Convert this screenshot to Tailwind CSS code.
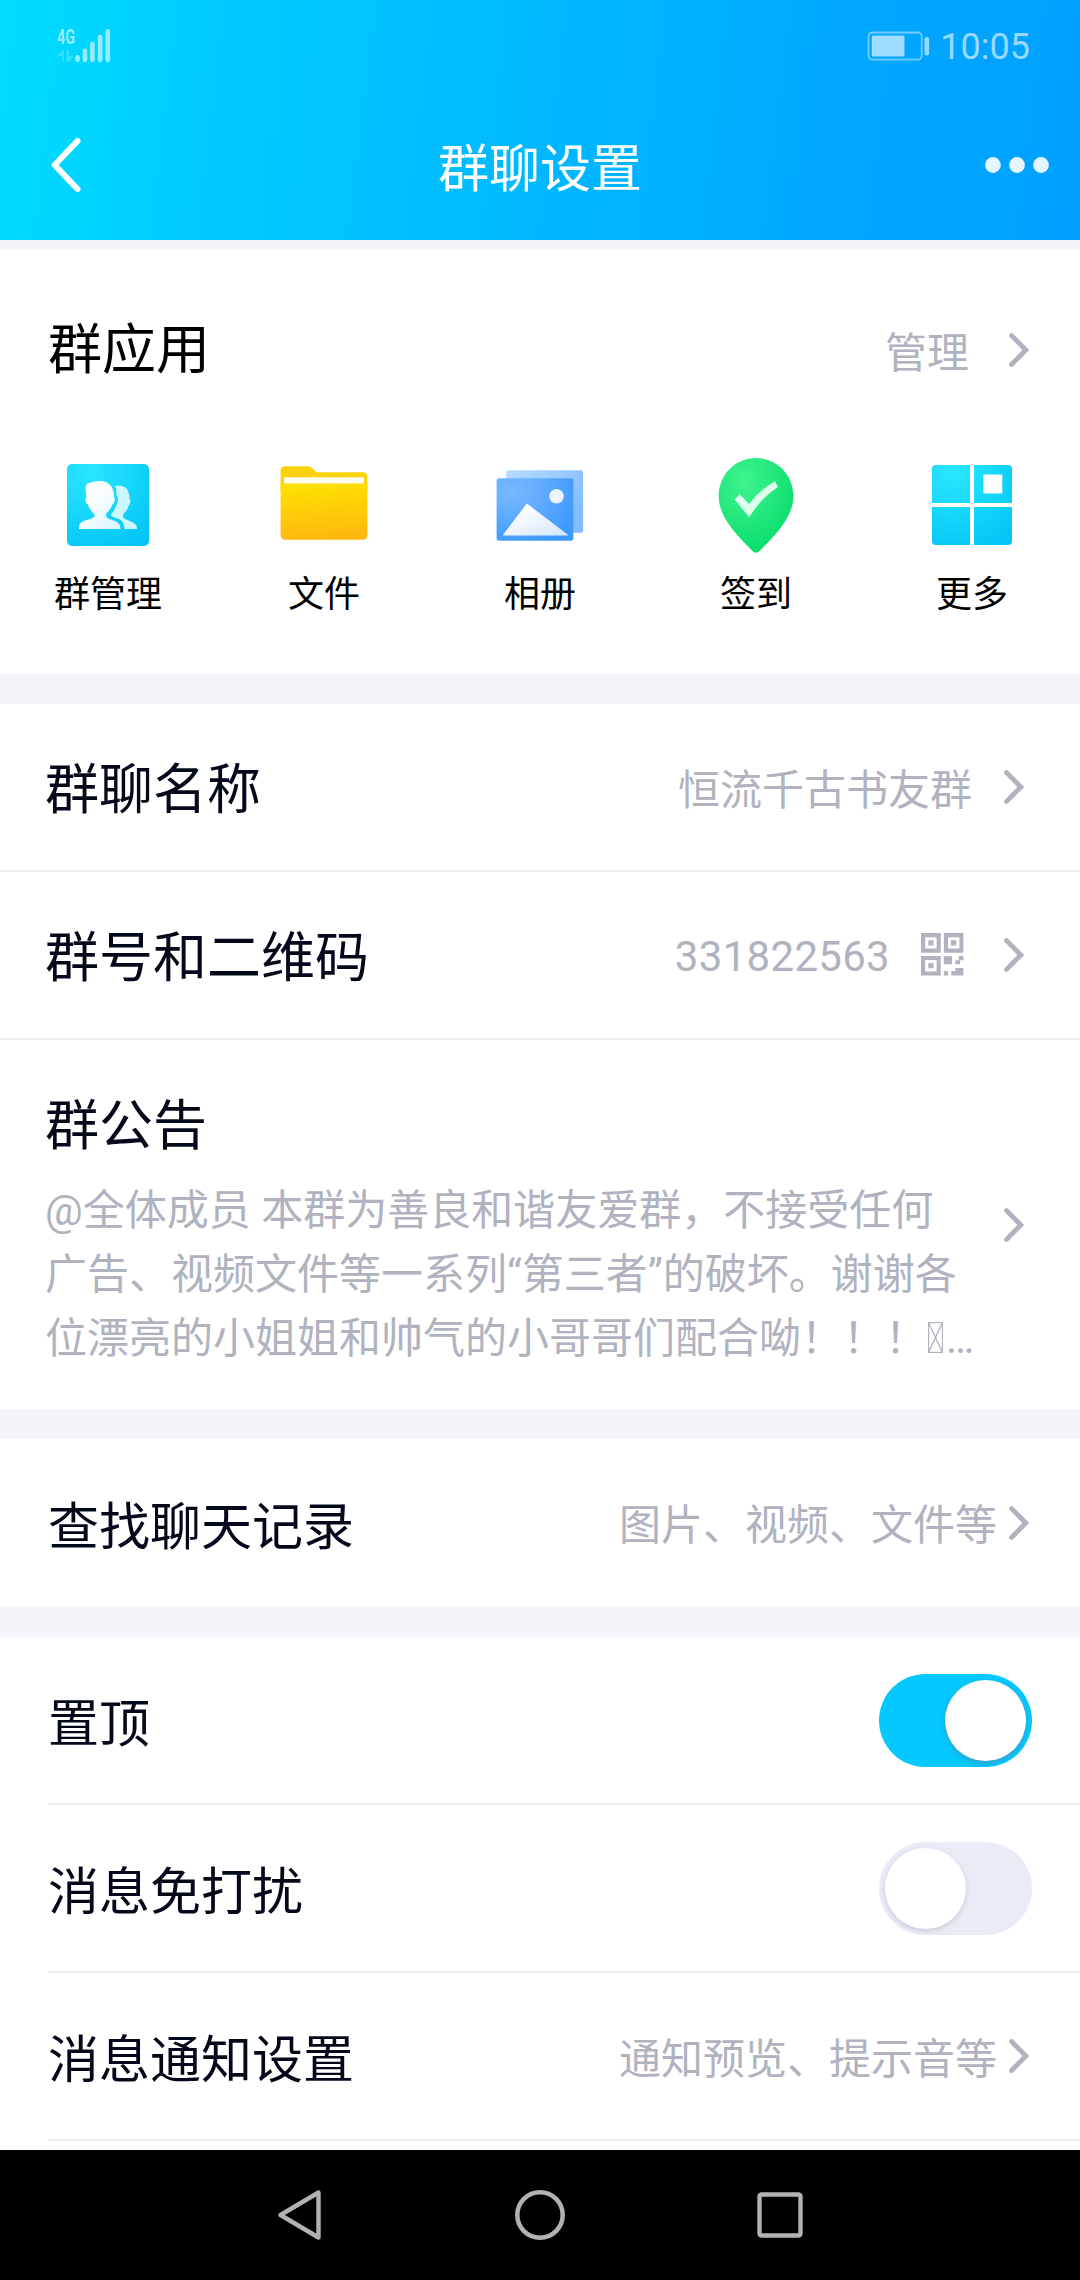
<!DOCTYPE html>
<html lang="zh-CN">
<head>
<meta charset="utf-8">
<title>群聊设置</title>
<script src="https://cdn.jsdelivr.net/npm/@tailwindcss/browser@4"></script>
</head>
<body class="w-[1080px] h-[2280px] overflow-hidden flex flex-col bg-[#f4f5fa] font-['Noto_Sans_CJK_SC',sans-serif] text-black whitespace-nowrap">
<svg class="hidden">
  <symbol id="chev" viewBox="0 0 20 34"><path d="M2.600 2.600L16.800 17L2.600 31.400" fill="none" stroke="#b0b3bf" stroke-width="4.900" stroke-linecap="round"/></symbol>
</svg>

<header class="h-[240px] shrink-0 flex flex-col text-white bg-[linear-gradient(97deg,#00dcff_0%,#00ccff_19%,#00b8ff_50%,#00a6ff_80%,#00a1ff_100%)]">
  <div class="h-[92px] flex items-center justify-between pl-[48px] pr-[50px]">
    <svg class="w-[72px] h-[52px] overflow-visible" viewBox="48 19 72 52" fill="#fff" fill-opacity=".58">
      <text x="57" y="43" font-family="Roboto" font-weight="700" font-size="21" textLength="18" lengthAdjust="spacingAndGlyphs">4G</text>
      <path opacity=".35" d="M62.500 49.500V61H64V49.500ZM57 55l5.500-6v6zM66.500 49H69v12h-2.500zM69 55h4.500L69 61z"/>
      <rect x="75.300" y="54" width="4.500" height="7" rx="2.200"/><rect x="82.700" y="47.400" width="4.600" height="13.600" rx="2.200"/><rect x="90.100" y="40.700" width="4.600" height="20.300" rx="2.200"/><rect x="97.800" y="33.700" width="4.700" height="27.300" rx="2.200"/><rect x="105.400" y="28" width="4.700" height="33" rx="2.200"/>
    </svg>
    <div class="flex items-center gap-[10px] text-white/60">
      <svg class="w-[63px] h-[30px]" viewBox="867.500 30.500 63 30">
        <rect x="869" y="32" width="53.200" height="27.200" rx="4" fill="none" stroke="#fff" stroke-opacity=".45" stroke-width="1.800"/>
        <rect x="872.300" y="35" width="32.700" height="21" rx="1.500" fill="#fff" fill-opacity=".62"/>
        <rect x="925" y="36.500" width="4.600" height="18.500" rx="2.200" fill="#fff" fill-opacity=".58"/>
      </svg>
      <span class="font-['Roboto'] text-[36px] leading-[42px] pt-[2px]">10:05</span>
    </div>
  </div>
  <div class="h-[148px] flex items-center justify-between pl-[50px] pr-[30px]">
    <svg class="w-[56px] h-[56px] mb-[2px]" viewBox="50 137 56 56"><path d="M77.500 141L54.600 165L77.500 189" fill="none" stroke="#fff" stroke-width="6" stroke-linecap="round" stroke-linejoin="round"/></svg>
    <h1 class="text-[51px] leading-[60px] pr-[10px] mb-[3px]">群聊设置</h1>
    <svg class="w-[66px] h-[20px] mb-[2px]" viewBox="984 155 66 20" fill="#e6f6ff"><circle cx="992.900" cy="165" r="7.900"/><circle cx="1017" cy="165" r="7.900"/><circle cx="1041" cy="165" r="7.900"/></svg>
  </div>
</header>

<main class="h-[1910px] shrink-0 overflow-hidden flex flex-col text-[#03081a]">
  <section class="mt-[9px] h-[425px] shrink-0 bg-white text-black">
    <div class="h-[202px] flex items-center justify-between pl-[48px] pr-[51px]">
      <h2 class="text-[54px] leading-[64px] mb-[9px]">群应用</h2>
      <div class="flex items-center">
        <span class="text-[42px] leading-[50px] text-[#b0b3bf] mr-[40px]">管理</span>
        <svg class="w-[20px] h-[34px]"><use href="#chev"/></svg>
      </div>
    </div>
    <div class="grid grid-cols-5 text-[36px] leading-[42px] text-center">
      <div class="flex flex-col items-center">
        <svg class="w-[108px] h-[108px]" viewBox="54 451 108 108">
          <defs>
            <radialGradient id="cy" cx=".27" cy=".1" r="1.150"><stop stop-color="#29e7ff"/><stop offset="1" stop-color="#00c1f5"/></radialGradient>
            <linearGradient id="wh" x1="0" y1="0" x2="1" y2="1"><stop offset=".3" stop-color="#fff"/><stop offset="1" stop-color="#d6f6ff"/></linearGradient>
          </defs>
          <rect x="67" y="464" width="82" height="82" rx="5" fill="url(#cy)"/>
          <g transform="translate(67 464)">
            <path fill="#ccf7ff" d="M48 22Q55 20 60 25Q62.500 29 62.500 35Q64 36 63 39Q62.500 41 61.500 42Q60 47 56.500 50Q55 53 58 55L65 58Q70 60 70 65H57.500Q57 57 52 55Q46 53.500 43.500 51Q48 46 49 42Q51 39 51 34Q51 32 49.500 32Q50 27 48 22Z"/>
            <path fill="url(#wh)" d="M19 21Q20 19.500 22 19Q28 17 33 17Q40 17 44 22Q47 26 47 33Q48.500 34.500 47.500 37Q47 40 45.500 40.500Q44 45 39 50Q38.500 53 41 54.500L48 57Q53.500 59 53.500 65H12V62Q12.500 58 18 56.500L26 54Q28.500 52 27 50Q22 45 21 40.500Q19 40 18.500 36Q18 33.500 19.500 33Q18 25 19 21Z"/>
          </g>
        </svg>
        <span class="mt-[11px]">群管理</span>
      </div>
      <div class="flex flex-col items-center">
        <svg class="w-[108px] h-[108px]" viewBox="270 451 108 108">
          <defs><linearGradient id="ye" x1=".45" y1="0" x2=".55" y2="1"><stop stop-color="#ffe000"/><stop offset="1" stop-color="#ffb70f"/></linearGradient></defs>
          <path fill="#fad20a" d="M280.600 492V470.500a4.200 4.200 0 0 1 4.200-4.200H308q2.500 0 4 1.700l4.500 4.300H363a4.400 4.400 0 0 1 4.400 4.400V492z"/>
          <rect x="284" y="477.300" width="80" height="7" fill="#fffdf0"/>
          <path fill="url(#ye)" d="M280.600 483.500H367.400V535.300a4.400 4.400 0 0 1-4.400 4.400H285a4.400 4.400 0 0 1-4.400-4.400z"/>
        </svg>
        <span class="mt-[11px]">文件</span>
      </div>
      <div class="flex flex-col items-center">
        <svg class="w-[108px] h-[108px]" viewBox="486 451 108 108">
          <defs>
            <radialGradient id="bl" cx=".2" cy=".2" r=".9"><stop stop-color="#7ab9ff"/><stop offset="1" stop-color="#3f9aff"/></radialGradient>
            <linearGradient id="bb" x1="0" y1="0" x2="1" y2=".6"><stop stop-color="#b9dcff"/><stop offset="1" stop-color="#82bcff"/></linearGradient>
            <linearGradient id="tr" x1="0" y1="0" x2="1" y2="1"><stop offset=".2" stop-color="#fff"/><stop offset="1" stop-color="#d3e7ff"/></linearGradient>
          </defs>
          <rect x="506.200" y="470.300" width="76.900" height="62.400" rx="2.500" fill="url(#bb)"/>
          <rect x="496.600" y="478.300" width="76.800" height="62.400" rx="2.500" fill="url(#bl)"/>
          <path d="M526.900 504L567.500 535H503.400z" fill="url(#tr)" stroke="url(#tr)" stroke-width="1" stroke-linejoin="round"/>
          <circle cx="556.500" cy="496.300" r="7.300" fill="#ebf5ff"/>
        </svg>
        <span class="mt-[11px]">相册</span>
      </div>
      <div class="flex flex-col items-center">
        <svg class="w-[108px] h-[108px]" viewBox="702 451 108 108">
          <defs><radialGradient id="gr" cx=".35" cy=".25" r=".8"><stop stop-color="#3ff490"/><stop offset="1" stop-color="#07dc69"/></radialGradient></defs>
          <path fill="url(#gr)" d="M756 458C777 458 793.400 475 793.400 496C793.400 514 781 530 759.500 551Q756 554.500 752.500 551C731 530 718.700 514 718.700 496C718.700 475 735 458 756 458Z"/>
          <path fill="#dcffec" d="M734.600 499.500L739.700 494.300L749 504Q760 489.500 775 481.300L778 487Q762 497 749.200 517.200Z"/>
        </svg>
        <span class="mt-[11px]">签到</span>
      </div>
      <div class="flex flex-col items-center">
        <svg class="w-[108px] h-[108px]" viewBox="918 451 108 108">
          <path fill="url(#cy)" fill-rule="evenodd" d="M936 465H970V503H932V469a4 4 0 0 1 4-4zM974 465H1008a4 4 0 0 1 4 4V503H974zM932 507H970V545H936a4 4 0 0 1-4-4zM974 507H1012V541a4 4 0 0 1-4 4H974zM983.500 474.500V493.500H1002.300V474.500z"/>
        </svg>
        <span class="mt-[11px]">更多</span>
      </div>
    </div>
  </section>

  <section class="mt-[30px] h-[705px] shrink-0 bg-white flex flex-col">
    <div class="h-[168px] shrink-0 border-b-2 border-[#ececf4] flex items-center justify-between pl-[45px] pr-[56px]">
      <span class="text-[54px] leading-[64px] mb-[3px]">群聊名称</span>
      <div class="flex items-center">
        <span class="text-[42px] leading-[50px] text-[#b0b3bf] mr-[32px]">恒流千古书友群</span>
        <svg class="w-[20px] h-[34px]"><use href="#chev"/></svg>
      </div>
    </div>
    <div class="h-[168px] shrink-0 border-b-2 border-[#ececf4] flex items-center justify-between pl-[45px] pr-[56px]">
      <span class="text-[54px] leading-[64px] mb-[3px]">群号和二维码</span>
      <div class="flex items-center">
        <span class="font-['Roboto'] text-[42px] leading-[50px] tracking-[0.3px] pt-[4px] text-[#b0b3bf] mr-[31px]">331822563</span>
        <svg class="w-[43px] h-[43px] mr-[40px] mb-[2px]" viewBox="0 0 43 43" fill="#b0b3bf" fill-rule="evenodd">
          <path d="M0 0H19.700V19.700H0zM4.200 4.200V15.600H15.600V4.200zM7.300 7.300H12.500V12.500H7.300zM22.900 0H42.400V19.700H22.900zM27 4.200V15.600H38.400V4.200zM30 7.300H35.200V12.500H30zM0 22.900H19.700V42.400H0zM4.200 27V38.400H15.600V27zM7.300 30.100H12.500V35.300H7.300z"/>
          <path d="M22.800 23.200H31V31.300H22.800zM37.800 23H42.400V27.300H39V31.300H34.400V27.300H37.800zM22.800 38H27V42.400H22.800zM34.400 35H42.400V42.400H30.300V38H34.400z"/>
        </svg>
        <svg class="w-[20px] h-[34px]"><use href="#chev"/></svg>
      </div>
    </div>
    <div class="flex-1 flex items-center justify-between pl-[45px] pr-[56px]">
      <div class="h-[290px] flex flex-col">
        <span class="text-[54px] leading-[64px] mt-[10px]">群公告</span>
        <p class="mt-[25px] text-[42px] leading-[64px] text-[#b0b3bf] font-['Roboto','Noto_Sans_CJK_SC',sans-serif]">@全体成员 本群为善良和谐友爱群，不接受任何<br>广告、视频文件等一系列“第三者”的破坏。谢谢各<br>位漂亮的小姐姐和帅气的小哥哥们配合呦！！！<svg class="inline-block align-baseline w-[15px] h-[31px] ml-[1px] mr-[3px]" viewBox="0 0 15 31"><path d="M.5.5H14.500V30.500H.5zL14.500 30.500M14.500.5L.5 30.500" fill="none" stroke="#b0b3bf" stroke-width="1.300"/></svg>…</p>
      </div>
      <svg class="w-[20px] h-[34px]"><use href="#chev"/></svg>
    </div>
  </section>

  <section class="mt-[30px] h-[168px] shrink-0 bg-white flex items-center justify-between pl-[48px] pr-[51px]">
    <span class="text-[51px] leading-[60px]">查找聊天记录</span>
    <div class="flex items-center">
      <span class="text-[42px] leading-[50px] text-[#b0b3bf] mr-[12px] mb-[2px]">图片、视频、文件等</span>
      <svg class="w-[20px] h-[34px]"><use href="#chev"/></svg>
    </div>
  </section>

  <section class="mt-[30px] h-[513px] shrink-0 bg-white pl-[48px]">
    <div class="h-[168px] border-b-2 border-[#ebeded] flex items-center justify-between pr-[48px]">
      <span class="text-[51px] leading-[60px]">置顶</span>
      <div class="w-[153px] h-[93px] rounded-full bg-[#04c8ff] flex items-center justify-end pr-[6px] overflow-hidden"><div class="size-[81px] rounded-full bg-white shadow-[0_2px_5px_rgba(110,110,130,0.5)]"></div></div>
    </div>
    <div class="h-[168px] border-b-2 border-[#ebeded] flex items-center justify-between pr-[48px]">
      <span class="text-[51px] leading-[60px]">消息免打扰</span>
      <div class="w-[153px] h-[93px] rounded-full bg-[#e9ecf6] flex items-center pl-[6px] overflow-hidden"><div class="size-[81px] rounded-full bg-white shadow-[0_2px_5px_rgba(110,110,140,0.28)]"></div></div>
    </div>
    <div class="h-[168px] border-b-2 border-[#ebeded] flex items-center justify-between pr-[51px]">
      <span class="text-[51px] leading-[60px]">消息通知设置</span>
      <div class="flex items-center">
        <span class="text-[42px] leading-[50px] text-[#b0b3bf] mr-[12px]">通知预览、提示音等</span>
        <svg class="w-[20px] h-[34px]"><use href="#chev"/></svg>
      </div>
    </div>
  </section>
</main>

<nav class="h-[130px] shrink-0 bg-black flex items-center justify-center gap-[180px]">
  <svg class="size-[60px]" viewBox="0 0 60 60"><path d="M48.500 7.500V52.500L10.500 30Z" fill="none" stroke="#b2b2b2" stroke-width="4.400" stroke-linejoin="round"/></svg>
  <svg class="size-[60px]" viewBox="0 0 60 60"><circle cx="30" cy="30" r="22.700" fill="none" stroke="#b2b2b2" stroke-width="4.500"/></svg>
  <svg class="size-[60px]" viewBox="0 0 60 60"><rect x="9.500" y="9.500" width="41" height="41" rx="2" fill="none" stroke="#b2b2b2" stroke-width="4.400"/></svg>
</nav>
</body>
</html>
